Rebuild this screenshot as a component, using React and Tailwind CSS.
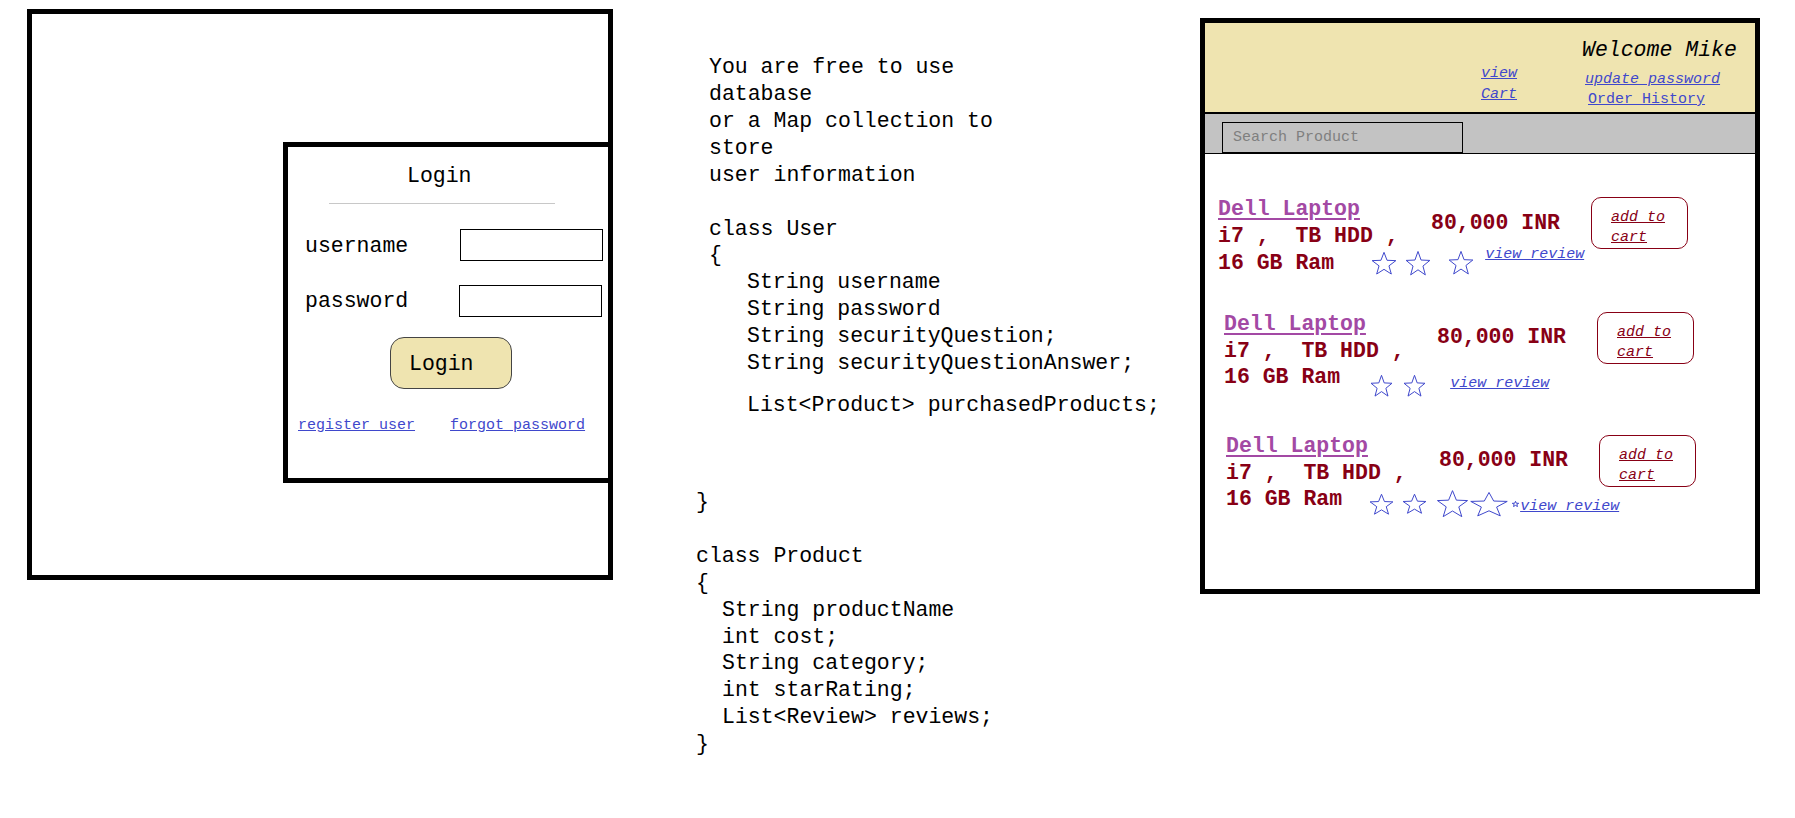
import React from "react"

const STAR = "12,1.3 14.82,8.92 22.94,9.25 16.57,14.28 18.76,22.1 12,17.6 5.24,22.1 7.43,14.28 1.06,9.25 9.18,8.92"

function Star({ w, h }) {
  return (
    <svg width={w} height={h} viewBox="0 0 24 24" preserveAspectRatio="none" className="shrink-0">
      <polygon points={STAR} fill="none" stroke="#3f48cc" strokeWidth="1" vectorEffect="non-scaling-stroke" />
    </svg>
  )
}

function Product({ row }) {
  return (
    <div className={row.wrap}>
      <div className="flex items-start">
        <div className="w-[213px] shrink-0 font-bold leading-[27px]">
          <div><a href="#" className="text-[#a349a4] underline underline-offset-[3px]">Dell Laptop</a></div>
          <div className="text-[#880015]">i7 ,  TB HDD ,</div>
        </div>
        <div className={`w-[160px] shrink-0 font-bold leading-[27px] text-[#880015] ${row.priceMt}`}>80,000 INR</div>
        <button className={`w-[97px] h-[52px] rounded-[10px] border border-[#880015] pl-[19px] pt-[10px] text-left text-[15px] leading-[20px] italic text-[#880015] font-['Liberation_Mono',monospace] ${row.btnMt}`}>
          <span className="underline">add to</span>
          <br />
          <span className="underline">cart</span>
        </button>
      </div>
      <div className={`flex items-center h-[27px] ${row.line3}`}>
        <span className="font-bold text-[#880015] leading-[27px]">16 GB Ram</span>
        <div className={row.starsBox}>{row.stars}</div>
        <a href="#" className={`text-[15px] leading-[20px] italic underline text-[#3f48cc] ${row.review}`}>view review</a>
      </div>
    </div>
  )
}

const rows = [
  {
    wrap: "pl-[13px] mt-[42px]",
    priceMt: "mt-[14px]",
    btnMt: "mt-[1px]",
    line3: "mt-0",
    starsBox: "flex items-center ml-[37px] -mt-[1px]",
    stars: (
      <>
        <Star w={26} h={25} />
        <span className="w-[8px]" />
        <Star w={26} h={27} />
        <span className="w-[17px]" />
        <Star w={26} h={26} />
      </>
    ),
    review: "ml-[11px] mb-[18px]",
  },
  {
    wrap: "pl-[19px] mt-[34px]",
    priceMt: "mt-[13px]",
    btnMt: "mt-[1px]",
    line3: "-mt-[1px]",
    starsBox: "flex items-center ml-[30px] mt-[16px]",
    stars: (
      <>
        <Star w={23} h={24} />
        <span className="w-[10px]" />
        <Star w={23} h={24} />
      </>
    ),
    review: "ml-[24px] mt-[13px]",
  },
  {
    wrap: "pl-[21px] mt-[42px]",
    priceMt: "mt-[14px]",
    btnMt: "mt-[2px]",
    line3: "-mt-[1px]",
    starsBox: "flex items-center ml-[27px] mt-[9px]",
    stars: (
      <>
        <Star w={25} h={23} />
        <span className="w-[8px]" />
        <Star w={25} h={22} />
        <span className="w-[9px]" />
        <Star w={33} h={30} />
        <Star w={40} h={27} />
        <span className="w-[3px]" />
        <Star w={7} h={6} />
      </>
    ),
    review: "ml-[1px] mt-[15px]",
  },
]

export default function App() {
  return (
    <div className="flex items-start w-[1795px] h-[818px] overflow-hidden bg-white text-black whitespace-pre font-['Liberation_Mono','DejaVu_Sans_Mono',monospace] text-[21.5px]">
      {/* login wireframe */}
      <div className="ml-[27px] mt-[9px] w-[586px] h-[571px] shrink-0 border-[5px] border-black flex justify-end items-start">
        <div className="mt-[128px] w-[325px] h-[341px] border-[5px] border-r-0 border-black flex flex-col">
          <div className="pl-[119px] pt-[16px] leading-[27px]">Login</div>
          <div className="ml-[41px] mt-[13px] w-[226px] h-px bg-[#c8c8c8]" />
          <div className="mt-[25px] flex items-center">
            <span className="w-[172px] pl-[17px] pt-[2px] leading-[27px]">username</span>
            <input readOnly className="w-[143px] h-[32px] border border-black outline-none" />
          </div>
          <div className="mt-[24px] flex items-center">
            <span className="w-[171px] pl-[17px] leading-[27px]">password</span>
            <input readOnly className="w-[143px] h-[32px] border border-black outline-none" />
          </div>
          <button className="mt-[20px] ml-[102px] w-[122px] h-[52px] rounded-[14px] border border-[#444] bg-[#efe4b0] pl-[18px] pt-[2px] text-left leading-[27px] font-['Liberation_Mono',monospace] text-[21.5px]">
            Login
          </button>
          <div className="mt-[27px] pl-[10px] flex gap-[35px] text-[15px] leading-[20px]">
            <a href="#" className="underline text-[#3f48cc]">register user</a>
            <a href="#" className="underline text-[#3f48cc]">forgot password</a>
          </div>
        </div>
      </div>

      {/* notes */}
      <div className="ml-[83px] mt-[54px] w-[504px] shrink-0 leading-[26.9px]">
        <div className="pl-[13px]">
          <div>You are free to use</div>
          <div>database</div>
          <div>or a Map collection to</div>
          <div>store</div>
          <div>user information</div>
          <div className="mt-[27px]">class User</div>
          <div>{"{"}</div>
          <div className="pl-[38px]">
            <div>String username</div>
            <div>String password</div>
            <div>String securityQuestion;</div>
            <div>String securityQuestionAnswer;</div>
            <div className="mt-[15px]">{"List<Product> purchasedProducts;"}</div>
          </div>
        </div>
        <div className="mt-[70px]">{"}"}</div>
        <div className="mt-[27px]">class Product</div>
        <div>{"{"}</div>
        <div className="pl-[26px]">
          <div>String productName</div>
          <div>int cost;</div>
          <div>String category;</div>
          <div>int starRating;</div>
          <div>{"List<Review> reviews;"}</div>
        </div>
        <div>{"}"}</div>
      </div>

      {/* shop wireframe */}
      <div className="mt-[18px] w-[560px] h-[576px] shrink-0 border-[5px] border-black flex flex-col">
        <div className="h-[91px] bg-[#efe4b0] border-b-2 border-black flex items-start">
          <div className="ml-[276px] mt-[41px] flex flex-col text-[15px] leading-[20.7px] italic">
            <a href="#" className="underline text-[#3f48cc]">view</a>
            <a href="#" className="underline text-[#3f48cc]">Cart</a>
          </div>
          <div className="ml-[65px] pt-[14px] flex flex-col items-start">
            <div className="italic leading-[27px]">Welcome Mike</div>
            <a href="#" className="ml-[3px] mt-[6px] text-[15px] leading-[20px] italic underline text-[#3f48cc]">update password</a>
            <a href="#" className="ml-[6px] text-[15px] leading-[20px] underline text-[#3f48cc]">Order History</a>
          </div>
        </div>
        <div className="h-[40px] bg-[#c3c3c3] border-b border-black pt-[5px] pl-[17px]">
          <input
            readOnly
            placeholder="Search Product"
            className="w-[241px] h-[31px] border border-black bg-transparent pl-[10px] text-[15px] outline-none placeholder:text-[#7f7f7f] font-['Liberation_Mono',monospace]"
          />
        </div>
        {rows.map((row, i) => (
          <Product key={i} row={row} />
        ))}
      </div>
    </div>
  )
}
